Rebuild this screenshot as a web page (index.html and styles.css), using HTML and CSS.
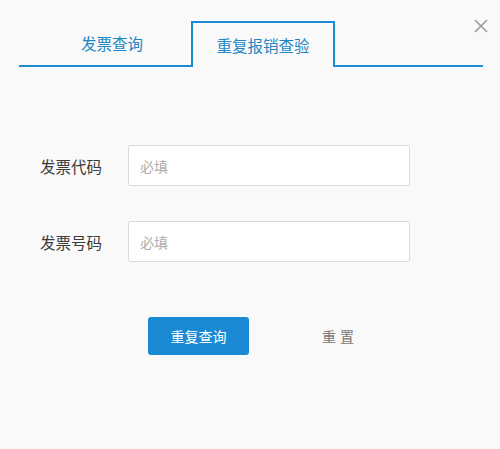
FILE: index.html
```html
<!DOCTYPE html>
<html lang="zh-CN">
<head>
<meta charset="utf-8">
<title>重复报销查验</title>
<link rel="stylesheet" href="styles.css">
</head>
<body>
<div class="dialog">
  <button class="close" aria-label="关闭">
    <svg width="14" height="14" viewBox="0 0 14 14"><path d="M1 1 L13 13 M13 1 L1 13" stroke="#9a9a9a" stroke-width="1.6" fill="none"/></svg>
  </button>
  <div class="tabs">
    <div class="tab tab-first">发票查询</div>
    <div class="tab tab-active">重复报销查验</div>
    <div class="tab-rest"></div>
  </div>
  <form class="form">
    <div class="row">
      <label class="label">发票代码</label>
      <input class="input" type="text" placeholder="必填">
    </div>
    <div class="row">
      <label class="label">发票号码</label>
      <input class="input" type="text" placeholder="必填">
    </div>
    <div class="actions">
      <button type="button" class="btn-primary">重复查询</button>
      <button type="button" class="btn-reset">重置</button>
    </div>
  </form>
</div>
</body>
</html>
```
FILE: styles.css
```css
html, body {
  margin: 0;
  padding: 0;
  background: #f9f9f9;
}
body {
  font-family: "Noto Sans CJK SC", "Noto Sans", sans-serif;
  width: 500px;
  height: 449px;
  overflow: hidden;
}
.dialog {
  position: relative;
  padding-top: 21px;
}
.close {
  position: absolute;
  top: 19px;
  left: 474px;
  width: 14px;
  height: 14px;
  padding: 0;
  border: 0;
  background: none;
  display: block;
}
.close svg { display: block; }
.tabs {
  display: flex;
  margin-left: 19px;
  width: 464px;
  height: 46px;
}
.tab {
  box-sizing: border-box;
  font-size: 15.5px;
  color: #2185c2;
  line-height: 44px;
  text-align: center;
  flex: none;
}
.tab-first {
  width: 172px;
  padding-left: 14px;
  border-bottom: 2px solid #1b8bd2;
}
.tab-active {
  width: 144px;
  border: 2px solid #1b8bd2;
  border-bottom: none;
  line-height: 44px;
}
.tab-rest {
  flex: 1;
  border-bottom: 2px solid #1b8bd2;
}
.form {
  margin: 78px 0 0 0;
}
.row {
  display: flex;
  align-items: center;
  height: 41px;
  margin-bottom: 35px;
}
.label {
  box-sizing: border-box;
  width: 128px;
  padding-left: 40px;
  font-size: 15.5px;
  color: #3a3a3a;
  line-height: 20px;
}
.input {
  box-sizing: border-box;
  width: 282px;
  height: 41px;
  border: 1px solid #dcdcdc;
  border-radius: 2px;
  background: #fff;
  padding: 0 11px;
  font-family: inherit;
  font-size: 14px;
  outline: none;
}
.input::placeholder {
  color: #adadad;
}
.actions {
  display: flex;
  align-items: center;
  margin-top: 55px;
  padding-left: 148px;
}
.btn-primary {
  width: 101px;
  height: 38px;
  border: 0;
  border-radius: 3px;
  background: #1a8ad5;
  color: #fff;
  font-family: inherit;
  font-size: 14px;
  padding: 0;
}
.btn-reset {
  margin-left: 73px;
  border: 0;
  background: none;
  padding: 0;
  font-family: inherit;
  font-size: 14px;
  letter-spacing: 4px;
  color: #777;
}
```
